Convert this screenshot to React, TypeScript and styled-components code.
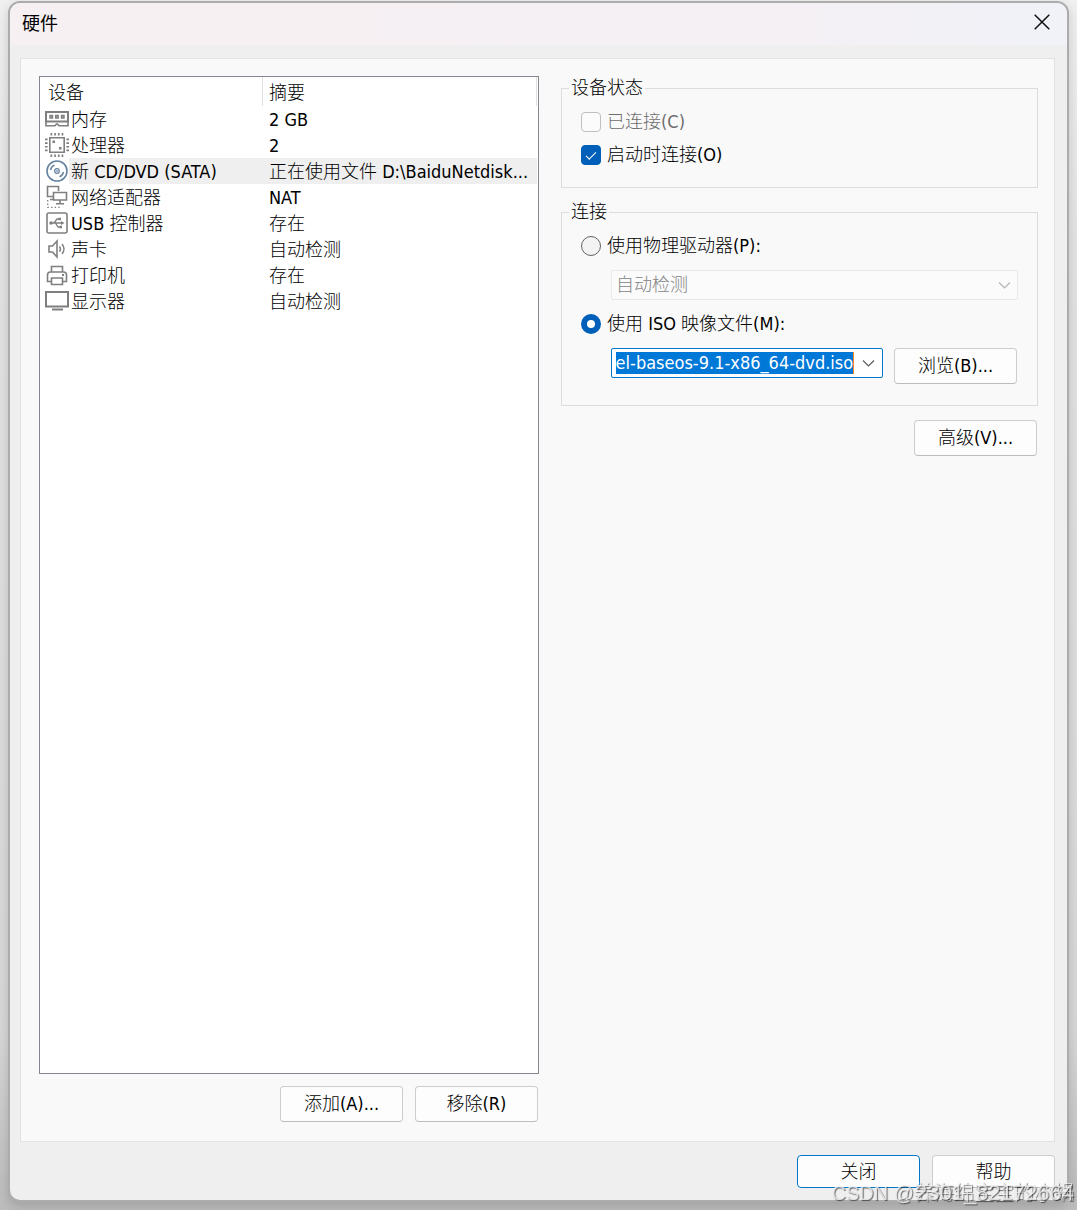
import React, { useEffect, useRef } from "react";
import styled, { createGlobalStyle, css } from "styled-components";

const uiFont = `"DejaVu Sans Condensed", "Noto Sans", "Noto Sans CJK SC", sans-serif`;
const titleFont = `"Noto Sans CJK SC", "Noto Sans", sans-serif`;

const GlobalStyle = createGlobalStyle`
  *, *::before, *::after { box-sizing: border-box; }
  body {
    margin: 0;
    background: linear-gradient(to bottom, #f0f0f0, #e4e4e4 20%, #d8d8d8 85%, #bcbcbc);
    font: 300 18px/26px ${uiFont};
    color: #000;
  }
`;

const Desktop = styled.div`
  display: flex;
  flex-direction: column;
  min-height: 100vh;
  padding: 1px 8px 8px;
`;

const Dialog = styled.main`
  flex: 1;
  display: flex;
  flex-direction: column;
  border: 2px solid #acacac;
  border-radius: 12px;
  background: #efefef;
  overflow: hidden;
  box-shadow: 0 4px 12px rgba(0, 0, 0, 0.16);
`;

const TitleBar = styled.header`
  display: flex;
  align-items: center;
  justify-content: space-between;
  height: 42px;
  padding: 0 15px 4px 12px;
  background: linear-gradient(to right, #f6f0f2, #f5f0f4 70%, #f0f2f8);
`;

const Title = styled.h1`
  margin: 0;
  font: 400 18px/26px ${titleFont};
`;

const CloseButton = styled.button`
  display: grid;
  place-items: center;
  width: 20px;
  height: 20px;
  padding: 0;
  border: 0;
  background: none;
`;

const Panel = styled.section`
  flex: 1;
  display: grid;
  grid-template-columns: 500fr 477fr;
  column-gap: 22px;
  margin: 13px 12px 0 10px;
  padding: 17px 16px 19px 18px;
  border: 1px solid #e3e3e3;
  background: #f9f9f9;
`;

const Column = styled.div`
  display: flex;
  flex-direction: column;
  min-width: 0;
`;

const DeviceList = styled.div`
  flex: 1;
  border: 1px solid #828790;
  background: #fff;
  padding-right: 1px;
`;

const DeviceTable = styled.table`
  width: 100%;
  table-layout: fixed;
  border-collapse: separate;
  border-spacing: 0;
  white-space: nowrap;
`;

const HeadCell = styled.th<{ $first?: boolean }>`
  width: ${(p) => (p.$first ? "223px" : "auto")};
  height: 29px;
  padding: ${(p) => (p.$first ? "3px 0 0 8px" : "3px 0 0 6px")};
  border-right: 1px solid #e0e0e0;
  font-weight: 300;
  text-align: left;
`;

const DeviceRow = styled.tr<{ $selected?: boolean }>`
  ${(p) =>
    p.$selected &&
    css`
      background: linear-gradient(to right, #fff 29px, #efefef 29px);
    `}
`;

const Cell = styled.td`
  height: 26px;
  padding: 2px 6px 0;
  line-height: 24px;
  overflow: hidden;
  text-overflow: ellipsis;
`;

const NameCell = styled(Cell)`
  padding: 0 0 0 5px;
`;

const DeviceName = styled.span`
  display: flex;
  align-items: center;
  gap: 2px;
  height: 26px;
`;

const DeviceLabel = styled.span`
  padding-top: 2px;
`;

const ButtonRow = styled.div<{ $top: number; $inset?: boolean }>`
  display: flex;
  justify-content: flex-end;
  gap: 12px;
  margin-top: ${(p) => p.$top}px;
  padding-right: ${(p) => (p.$inset ? 1 : 0)}px;
`;

const Button = styled.button<{ $primary?: boolean; $short?: boolean }>`
  flex: none;
  width: 123px;
  height: ${(p) => (p.$short ? 33 : 36)}px;
  padding: 0;
  border: 1px solid ${(p) => (p.$primary ? "#0078c8" : "#cdcdcd")};
  border-bottom-color: ${(p) => (p.$primary ? "#0078c8" : "#bcbcbc")};
  border-radius: 4px;
  background: #fdfdfd;
  color: #000;
  font: inherit;
`;

const Group = styled.fieldset<{ $gap: number; $bottom: number }>`
  display: flex;
  flex-direction: column;
  gap: ${(p) => p.$gap}px;
  min-width: 0;
  margin: 0;
  padding: 10px 19px ${(p) => p.$bottom}px;
  border: 1px solid #dcdcdc;

  & + & {
    margin-top: 12px;
  }
`;

const Legend = styled.legend`
  margin-left: -12px;
  padding: 0 2px;
  line-height: 24px;
`;

const Option = styled.label<{ $disabled?: boolean }>`
  display: flex;
  align-items: center;
  gap: 6px;
  height: 24px;
  color: ${(p) => (p.$disabled ? "#6d6d6d" : "#000")};
`;

const Check = styled.input`
  appearance: none;
  flex: none;
  display: grid;
  place-items: center;
  width: 20px;
  height: 20px;
  margin: 0;
  border: 1px solid #c0c0c0;
  border-radius: 4px;
  background: #fbfbfb;

  &:checked {
    border-color: #005fb8;
    background: #005fb8;
  }
  &:checked::before {
    content: "";
    width: 10px;
    height: 5px;
    border: solid #fff;
    border-width: 0 0 1px 1px;
    transform: translateY(-1px) rotate(-45deg);
  }
`;

const Radio = styled.input`
  appearance: none;
  flex: none;
  width: 20px;
  height: 20px;
  margin: 0;
  border: 1px solid #626262;
  border-radius: 50%;
  background: #f3f3f3;

  &:checked {
    border: 6px solid #005fb8;
    background: #fff;
  }
`;

const Indent = styled.div<{ $inset?: boolean }>`
  display: flex;
  align-items: flex-end;
  gap: 11px;
  padding: 0 ${(p) => (p.$inset ? 1 : 0)}px 0 30px;
`;

const SelectBox = styled.div`
  position: relative;
  flex: 1;

  svg {
    position: absolute;
    top: 9px;
    right: 7px;
    pointer-events: none;
  }
`;

const Select = styled.select`
  appearance: none;
  display: block;
  width: 100%;
  height: 30px;
  padding: 0 28px 0 4px;
  border: 1px solid #e8e8e8;
  border-radius: 2px;
  background: #fbfbfb;
  color: #838383;
  font: inherit;
  opacity: 1;
`;

const Combo = styled.div`
  flex: 1;
  align-self: flex-start;
  display: flex;
  align-items: center;
  height: 30px;
  min-width: 0;
  padding-left: 4px;
  border: 1px solid #0078c8;
  border-radius: 2px;
  background: #fff;
`;

const ComboInput = styled.input`
  flex: 1;
  min-width: 0;
  height: 22px;
  padding: 0;
  border: 0;
  border-right: 1px solid #ff8728;
  outline: 0;
  background: #fff;
  font: inherit;
  line-height: 22px;

  &::selection {
    background: #0078d7;
    color: #fff;
  }
`;

const ComboArrow = styled.button`
  display: grid;
  place-items: center;
  width: 28px;
  height: 28px;
  padding: 0;
  border: 0;
  background: none;
`;

const Footer = styled.footer`
  padding: 0 12px 12px;
`;

const Watermark = styled.div`
  position: fixed;
  right: 3px;
  bottom: 4px;
  display: grid;
  justify-items: end;
  align-items: center;
  font: 300 20px/26px "Liberation Sans", "Noto Sans CJK SC", sans-serif;
  color: rgba(240, 240, 240, 0.8);
  text-shadow: 1px 1px 1px rgba(0, 0, 0, 0.55);
  white-space: nowrap;
  pointer-events: none;
`;

const WatermarkLine = styled.span<{ $size: number }>`
  grid-area: 1 / 1;
  font-size: ${(p) => p.$size}px;
`;

const Icon = styled.svg<{ $color?: string; $weight?: number }>`
  flex: none;
  width: 24px;
  height: 24px;
  fill: none;
  stroke: ${(p) => p.$color ?? "#7f7f7f"};
  stroke-width: ${(p) => p.$weight ?? 1.6};
`;

const Chevron = ({ color }: { color: string }) => (
  <svg width="13" height="12" viewBox="0 0 13 12" fill="none" stroke={color} strokeWidth="1.2">
    <path d="M1 3.5 6.5 9 12 3.5" />
  </svg>
);

const icons = {
  memory: (
    <Icon viewBox="0 0 24 24" $weight={2}>
      <path d="M1 5h22v9.500H1z" />
      <path strokeWidth="1.600" d="M1 15v3.700h9l1.500-1.700h1l1.500 1.700h9V15" />
      <path fill="#b0b0b0" strokeWidth="1.400" d="M5 8.500h2.500v2.500H5zM10.700 8.500h2.500v2.500h-2.500zM16.500 8.500h2.500v2.500h-2.500z" />
    </Icon>
  ),
  cpu: (
    <Icon viewBox="0 0 24 24">
      <path d="M4.800 4.800h14.400v14.400H4.800z" />
      <path
        strokeWidth="2.600"
        strokeDasharray="1.700 2"
        d="M5.500 1.300h13.200M5.500 22.700h13.200M1.300 5.500v13.200M22.700 5.500v13.200"
      />
      <path fill="#7f7f7f" stroke="none" d="M7.500 7.500H10V10H7.500zM14 14h2.500v2.500H14z" />
    </Icon>
  ),
  disc: (
    <Icon viewBox="0 0 24 24" $color="#6583a0">
      <circle cx="12" cy="12" r="10" />
      <circle cx="12" cy="12" r="2.300" strokeWidth="1.300" />
      <circle cx="12" cy="12" r="0.500" strokeWidth="1" />
      <path strokeWidth="1.400" d="M5.500 11a6.500 6.500 0 0 1 4-4.800M18.500 13a6.500 6.500 0 0 1-4 4.800" />
    </Icon>
  ),
  network: (
    <Icon viewBox="0 0 24 24">
      <path d="M8.500 11.500H2.500V1.500h11V6M8.500 7.500h13v7.500h-13zM5 14.500h3.500M15 15v3.500M11 18.800h8" />
      <path strokeWidth="1.300" strokeDasharray="1.400 2.200" d="M2.700 15v7.400h14" />
    </Icon>
  ),
  usb: (
    <Icon viewBox="0 0 24 24">
      <rect x="2" y="2" width="20" height="20" rx="2" />
      <path strokeWidth="1.300" d="M6 12h12M9 12l3-4h2M10.500 12l2.500 4h2" />
      <path
        fill="#7f7f7f"
        stroke="none"
        d="M19.500 12 16 10v4zM13.500 6.700h2.500v2.500h-2.500zM14.500 14.700H17v2.500h-2.500z"
      />
      <circle cx="6" cy="12" r="1.700" fill="#7f7f7f" stroke="none" />
    </Icon>
  ),
  sound: (
    <Icon viewBox="0 0 24 24">
      <path d="M4 9h3.500l4.500-5v16l-4.500-5H4z" />
      <path strokeWidth="1.400" d="M14.500 9.300q2 2.700 0 5.400M17 7q4 5 0 10" />
    </Icon>
  ),
  printer: (
    <Icon viewBox="0 0 24 24">
      <path d="M6.500 9V3.500h11V9M6.500 18.500H2.500V12q0-3 3-3h13q3 0 3 3v6.500h-4M6.500 15h11v6.500h-11z" />
      <path strokeWidth="1.800" d="M17 12h2" />
    </Icon>
  ),
  display: (
    <Icon viewBox="0 0 24 24" $weight={2}>
      <path d="M1 3h22v14.500H1zM7 20.500h11" />
    </Icon>
  ),
};

type Device = { icon: keyof typeof icons; name: string; summary: string; selected?: boolean };

const devices: Device[] = [
  { icon: "memory", name: "内存", summary: "2 GB" },
  { icon: "cpu", name: "处理器", summary: "2" },
  { icon: "disc", name: "新 CD/DVD (SATA)", summary: "正在使用文件 D:\\BaiduNetdisk...", selected: true },
  { icon: "network", name: "网络适配器", summary: "NAT" },
  { icon: "usb", name: "USB 控制器", summary: "存在" },
  { icon: "sound", name: "声卡", summary: "自动检测" },
  { icon: "printer", name: "打印机", summary: "存在" },
  { icon: "display", name: "显示器", summary: "自动检测" },
];

export default function App() {
  const isoRef = useRef<HTMLInputElement>(null);

  useEffect(() => {
    const input = isoRef.current;
    if (!input) return;
    input.focus();
    input.select();
    input.scrollLeft = input.scrollWidth;
  }, []);

  return (
    <>
      <GlobalStyle />
      <Desktop>
        <Dialog>
          <TitleBar>
            <Title>硬件</Title>
            <CloseButton aria-label="关闭窗口">
              <svg width="16" height="16" viewBox="0 0 16 16" stroke="#111" strokeWidth="1.500">
                <path d="M.7.7 15.300 15.300M15.300.7.7 15.300" />
              </svg>
            </CloseButton>
          </TitleBar>

          <Panel>
            <Column>
              <DeviceList>
                <DeviceTable>
                  <thead>
                    <tr>
                      <HeadCell $first>设备</HeadCell>
                      <HeadCell>摘要</HeadCell>
                    </tr>
                  </thead>
                  <tbody>
                    {devices.map((d) => (
                      <DeviceRow key={d.name} $selected={d.selected}>
                        <NameCell>
                          <DeviceName>
                            {icons[d.icon]}
                            <DeviceLabel>{d.name}</DeviceLabel>
                          </DeviceName>
                        </NameCell>
                        <Cell>{d.summary}</Cell>
                      </DeviceRow>
                    ))}
                  </tbody>
                </DeviceTable>
              </DeviceList>
              <ButtonRow $top={12} $inset>
                <Button>添加(A)...</Button>
                <Button>移除(R)</Button>
              </ButtonRow>
            </Column>

            <Column>
              <Group $gap={9} $bottom={20}>
                <Legend>设备状态</Legend>
                <Option $disabled>
                  <Check type="checkbox" disabled />
                  已连接(C)
                </Option>
                <Option>
                  <Check type="checkbox" defaultChecked />
                  启动时连接(O)
                </Option>
              </Group>

              <Group $gap={12} $bottom={21}>
                <Legend>连接</Legend>
                <Option>
                  <Radio type="radio" name="source" />
                  使用物理驱动器(P):
                </Option>
                <Indent>
                  <SelectBox>
                    <Select disabled aria-label="物理驱动器">
                      <option>自动检测</option>
                    </Select>
                    <Chevron color="#b4b4b4" />
                  </SelectBox>
                </Indent>
                <Option>
                  <Radio type="radio" name="source" defaultChecked />
                  使用 ISO 映像文件(M):
                </Option>
                <Indent $inset>
                  <Combo>
                    <ComboInput
                      ref={isoRef}
                      aria-label="ISO 映像文件"
                      defaultValue="rhel-baseos-9.1-x86_64-dvd.iso"
                    />
                    <ComboArrow aria-label="展开">
                      <Chevron color="#5c5c5c" />
                    </ComboArrow>
                  </Combo>
                  <Button>浏览(B)...</Button>
                </Indent>
              </Group>
              <ButtonRow $top={14} $inset>
                <Button>高级(V)...</Button>
              </ButtonRow>
            </Column>
          </Panel>

          <Footer>
            <ButtonRow $top={13}>
              <Button $primary $short>
                关闭
              </Button>
              <Button $short>帮助</Button>
            </ButtonRow>
          </Footer>
        </Dialog>
      </Desktop>
      <Watermark>
        <WatermarkLine $size={20}>CSDN @养海绵宝宝的小蜗</WatermarkLine>
        <WatermarkLine $size={22}>2301_82172664</WatermarkLine>
      </Watermark>
    </>
  );
}
